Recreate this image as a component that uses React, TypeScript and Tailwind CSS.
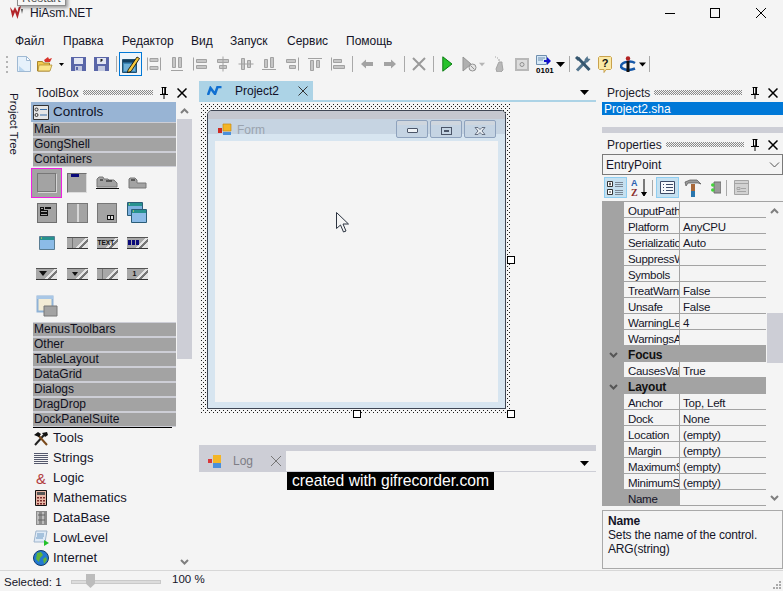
import type { ReactNode } from "react";

const MENU = [
  { label: "Файл", cls: "w-[48px]" },
  { label: "Правка", cls: "w-[59px]" },
  { label: "Редактор", cls: "w-[69px]" },
  { label: "Вид", cls: "w-[39px]" },
  { label: "Запуск", cls: "w-[57px]" },
  { label: "Сервис", cls: "w-[59px]" },
  { label: "Помощь", cls: "" },
];

const TOP_GROUPS = ["Main", "GongShell", "Containers"];
const BOTTOM_GROUPS = ["MenusToolbars", "Other", "TableLayout", "DataGrid", "Dialogs", "DragDrop", "DockPanelSuite"];

type Row = { name: string; value?: string; section?: boolean; selected?: boolean };

const ROWS: Row[] = [
  { name: "OuputPath" },
  { name: "Platform", value: "AnyCPU" },
  { name: "SerializationAssembly", value: "Auto" },
  { name: "SuppressWarnings" },
  { name: "Symbols" },
  { name: "TreatWarningsAsErrors", value: "False" },
  { name: "Unsafe", value: "False" },
  { name: "WarningLevel", value: "4" },
  { name: "WarningsAsErrors" },
  { name: "Focus", section: true },
  { name: "CausesValidation", value: "True" },
  { name: "Layout", section: true },
  { name: "Anchor", value: "Top, Left" },
  { name: "Dock", value: "None" },
  { name: "Location", value: "(empty)" },
  { name: "Margin", value: "(empty)" },
  { name: "MaximumSize", value: "(empty)" },
  { name: "MinimumSize", value: "(empty)" },
  { name: "Name", selected: true },
];

function Caret({ color = "#000" }: { color?: string }) {
  return (
    <svg width="9" height="5" viewBox="0 0 9 5">
      <path d="M0 0h9L4.500 5z" fill={color} />
    </svg>
  );
}

function Chevron({ up, color = "#7f7f7f" }: { up?: boolean; color?: string }) {
  return (
    <svg width="9" height="6" viewBox="0 0 9 6" fill="none" stroke={color} strokeWidth="2">
      <path d={up ? "M1 5l3.500-3.500L8 5" : "M1 1l3.500 3.500L8 1"} />
    </svg>
  );
}

function PanelHeader({ title, gripClass }: { title: string; gripClass: string }) {
  return (
    <div className="flex h-[17px] items-center text-[12px] text-[#1a1a2a]">
      <span>{title}</span>
      <div className={`h-[5px] bg-[conic-gradient(#8a8a8a_25%,#f4f4f4_0_50%,#8a8a8a_0_75%,#f4f4f4_0)] bg-[length:2px_2px] ${gripClass}`} />
      <svg width="10" height="12" viewBox="0 0 10 12" className="ml-auto" fill="none" stroke="#000">
        <path d="M3.500 1v6h3V1M2.500 .5h5M1 7.500h8M5 8v4" />
        <path d="M6 1v6" strokeWidth="1.500" />
      </svg>
      <svg width="10" height="10" viewBox="0 0 10 10" className="ml-[8px] mr-[5px]" stroke="#000" strokeWidth="1.500">
        <path d="M.5 .5l9 9M9.500 .5l-9 9" />
      </svg>
    </div>
  );
}

function Btn({ cls, children }: { cls: string; children?: ReactNode }) {
  return <div className={`flex h-full shrink-0 items-center justify-center ${cls}`}>{children}</div>;
}

function Sep({ cls }: { cls: string }) {
  return (
    <div className={`flex h-full shrink-0 items-center justify-center ${cls}`}>
      <div className="h-[16px] w-px bg-[#a9a9a9]" />
    </div>
  );
}

// grey, disabled alignment glyph made of bars
function AlignIcon({ d }: { d: string }) {
  return (
    <svg width="16" height="16" viewBox="0 0 16 16" fill="#c6c6c6" stroke="#a2a2a2">
      <path d={d} />
    </svg>
  );
}

const ALIGN_PATHS = [
  "M1.500 1.500v13M14.500 1.500v13M4 2.500h8v3H4zM4 10.500h8v3H4z",
  "M3.500 1.500h3v10h-3zM9.500 1.500h3v10h-3zM2 14.500h12",
  "M1.500 1.500v13M4.500 3.500h10v3h-10zM4.500 9.500h10v3h-10z",
  "M8 .5v15M2.500 3.500h11v3h-11zM4.500 9.500h7v3h-7z",
  "M.5 8h15M3.500 2.500h3v11h-3zM9.500 4.500h3v7h-3z",
  "M3.500 3.500h3v8h-3zM9.500 1.500h3v10h-3zM1 13.500h14",
  "M14.500 1.500v13M2.500 3.500h9v3h-9zM5.500 9.500h6v3h-6z",
  "M1 2.500h14M3.500 4.500h3v10h-3zM9.500 4.500h3v7h-3z",
  "M1.500 1.500v13M3.500 3.500h8v3h-8zM3.500 9.500h11v3h-11z",
];

function ToolBar() {
  return (
    <div className="flex h-[24px] shrink-0 items-center pl-[6px]">
      <div className="h-[17px] w-[6px] shrink-0 bg-[linear-gradient(#b4b4b4_40%,transparent_0)] bg-[length:2px_5px] bg-repeat-y" />
      <Btn cls="w-[23px]">
        <svg width="14" height="16" viewBox="0 0 14 16">
          <path d="M.5 .5h9l4 4v11H.5z" fill="#e6f1fb" stroke="#9fb9d3" />
          <path d="M2 10l6 5H2z" fill="#b9d5ee" />
          <path d="M9.500 .5v4h4z" fill="#fff" stroke="#9fb9d3" />
        </svg>
      </Btn>
      <Btn cls="w-[20px]">
        <svg width="16" height="16" viewBox="0 0 16 16">
          <path d="M.5 5.500h5l1 1.500h6v8H.5z" fill="#f1c94e" stroke="#a9852a" />
          <path d="M2 9h13l-2 6H1z" fill="#fbe58a" stroke="#a9852a" strokeWidth=".7" />
          <path d="M7 4l4-3 1 2 3-1-2 4-5 0z" fill="#d8332a" />
        </svg>
      </Btn>
      <Btn cls="w-[12px]">
        <svg width="5" height="3" viewBox="0 0 5 3"><path d="M0 0h5L2.500 3z" fill="#000" /></svg>
      </Btn>
      <Btn cls="w-[22px]">
        <svg width="15" height="14" viewBox="0 0 15 14">
          <path d="M0 0h15v14H0z" fill="#5a66a8" />
          <path d="M3 1h9v6H3z" fill="#e3e6f2" />
          <path d="M4 9h7v5H4z" fill="#c3c9e0" />
          <path d="M5 10h2v3H5z" fill="#5a66a8" />
        </svg>
      </Btn>
      <Btn cls="w-[24px]">
        <svg width="15" height="14" viewBox="0 0 15 14">
          <path d="M0 0h15v14H0z" fill="#5a66a8" />
          <path d="M3 1h9v6H3z" fill="#e3e6f2" />
          <path d="M4 9h7v5H4z" fill="#c3c9e0" />
          <path d="M6.500 2h2v2h-1v1h-1z" fill="#222" />
        </svg>
      </Btn>
      <Sep cls="w-[6px]" />
      <Btn cls="w-[23px] border border-[#0078d7] bg-[#eef5fb]">
        <svg width="18" height="17" viewBox="0 0 18 17">
          <path d="M.5 3.500h14v13H.5z" fill="#3a86b8" stroke="#22506f" />
          <path d="M1 4h13v2.500H1z" fill="#123f62" />
          <path d="M2 8h11v7H2z" fill="#6fb0d8" />
          <path d="M6 14l9-13 2.500 1.500L9 15.500 5.500 16.500z" fill="#f6c93d" stroke="#000" strokeWidth=".8" />
        </svg>
      </Btn>
      {ALIGN_PATHS.map((d) => (
        <Btn key={d} cls="w-[23px]"><AlignIcon d={d} /></Btn>
      ))}
      <Sep cls="w-[6px]" />
      <Btn cls="w-[23px]">
        <svg width="12" height="10" viewBox="0 0 12 10"><path d="M0 5l5-4.500V3h7v4H5v2.500z" fill="#a3a3a3" /></svg>
      </Btn>
      <Btn cls="w-[23px]">
        <svg width="12" height="10" viewBox="0 0 12 10"><path d="M12 5L7 .5V3H0v4h7v2.500z" fill="#a3a3a3" /></svg>
      </Btn>
      <Sep cls="w-[6px]" />
      <Btn cls="w-[23px]">
        <svg width="14" height="14" viewBox="0 0 14 14" stroke="#9a9a9a" strokeWidth="2"><path d="M1 1l12 12M13 1L1 13" /></svg>
      </Btn>
      <Sep cls="w-[6px]" />
      <Btn cls="w-[23px]">
        <svg width="11" height="16" viewBox="0 0 11 16"><path d="M.8 .8L10 8 .8 15.200z" fill="#27c22c" stroke="#0a7d12" /></svg>
      </Btn>
      <Btn cls="w-[20px]">
        <svg width="15" height="16" viewBox="0 0 15 16">
          <path d="M1 1l8 7-8 7z" fill="#b0b0b0" stroke="#939393" />
          <circle cx="10.500" cy="11.500" r="3.500" fill="#e4e4e4" stroke="#939393" />
          <path d="M8.500 9.500l4 4" stroke="#939393" />
        </svg>
      </Btn>
      <Btn cls="w-[6px]"><Caret color="#b5b5b5" /></Btn>
      <Btn cls="w-[27px]">
        <svg width="10" height="16" viewBox="0 0 10 16">
          <path d="M1 1h1M3 2h1M5 3v2M5 6h3v2l1 6-2 2H3l-1-3 2-5z" fill="#b9b9b9" stroke="#a4a4a4" />
        </svg>
      </Btn>
      <Btn cls="w-[20px]">
        <svg width="14" height="13" viewBox="0 0 14 13">
          <path d="M0 0h14v13H0z" fill="#b8b8b8" />
          <path d="M2 2h10v9H2z" fill="#dcdcdc" />
          <circle cx="7" cy="6.500" r="2" fill="none" stroke="#8f8f8f" />
        </svg>
      </Btn>
      <Btn cls="w-[23px]">
        <div className="relative h-[18px] w-[15px]">
          <svg width="15" height="11" viewBox="0 0 15 11" className="absolute left-0 top-0">
            <path d="M.5 .5h10v9H.5z" fill="#d6e8f7" stroke="#6f8fae" />
            <path d="M2 3h7M2 5h5" stroke="#6f8fae" />
            <path d="M8 5h3V2l4 4-4 4V7H8z" fill="#1111cc" />
          </svg>
          <span className="absolute bottom-[-2px] left-0 text-[8px] font-bold leading-[9px] text-black">0101</span>
        </div>
      </Btn>
      <Btn cls="w-[10px]"><Caret /></Btn>
      <Sep cls="w-[8px]" />
      <Btn cls="w-[20px]">
        <svg width="16" height="16" viewBox="0 0 16 16" fill="none">
          <path d="M2 14.500L13 3" stroke="#54768f" strokeWidth="3" />
          <path d="M9.500 3.500l3-3.500 .5 2.500 2.500 .5L12.500 6.500z" fill="#54768f" />
          <path d="M3 2l11.500 12" stroke="#35566f" strokeWidth="3" />
          <path d="M0 2l2-2 3 2-2 3z" fill="#35566f" />
        </svg>
      </Btn>
      <Btn cls="w-[24px]">
        <svg width="14" height="17" viewBox="0 0 14 17">
          <path d="M1.500 .5h11l1 1v11l-1 1H8l-2 3v-3H1.500l-1-1v-11z" fill="#fbe9a6" stroke="#c9a24d" />
          <text x="7" y="11" textAnchor="middle" fontSize="11" fontWeight="700" fontFamily="Liberation Sans, sans-serif" fill="#111">?</text>
        </svg>
      </Btn>
      <Btn cls="w-[22px]">
        <svg width="16" height="17" viewBox="0 0 16 17">
          <path d="M15 7C11 4.500 2 5.500 1 10c-.5 3 7 5.500 14 2.500" fill="none" stroke="#1557a8" strokeWidth="2.500" />
          <path d="M6.500 5h3v11h-3z" fill="#111" />
          <circle cx="8" cy="2.500" r="2.200" fill="#b22222" />
        </svg>
      </Btn>
      <Btn cls="w-[7px]"><Caret /></Btn>
      <Sep cls="w-[6px]" />
    </div>
  );
}

function Well({ children }: { children: ReactNode }) {
  return <div className="flex h-full items-center justify-center">{children}</div>;
}

function ToolGrid() {
  const win = "flex h-[20px] w-[20px] border border-[#6f6f6f] border-r-[#dcdcdc] border-b-[#dcdcdc] bg-[#a3a3a3]";
  const strip = "relative h-[12px] w-[21px] border-y border-t-[#555] border-b-[#333] bg-[#a8a8a8] bg-[linear-gradient(135deg,#a8a8a8_60%,#e5e5e5_60%_70%,#777_70%_80%,#e5e5e5_80%)]";
  return (
    <div className="grid h-[155px] grid-cols-[31px_30px_30px_30px] grid-rows-[31px_29px_31px_31px_33px]">
      <Well>
        <div className="flex h-[30px] w-[31px] items-center justify-center bg-[#a3a3a3] shadow-[inset_0_0_0_1px_#f020e0]">
          <div className="h-[19px] w-[19px] border border-[#777] shadow-[1px_1px_0_#d5d5d5]" />
        </div>
      </Well>
      <Well><div className={win}><div className="ml-[3px] h-[3px] w-[8px] bg-[#0a0a7a]" /></div></Well>
      <Well>
        <svg width="23" height="13" viewBox="0 0 23 13">
          <path d="M1 11V3l2-2h4l1 2h4l1 1h5l3 3v4z" fill="#a3a3a3" stroke="#777" />
          <path d="M4 4h3M10 5h6" stroke="#111" />
          <path d="M0 12.500h23" stroke="#111" />
        </svg>
      </Well>
      <Well>
        <svg width="19" height="12" viewBox="0 0 19 12">
          <path d="M1 11V2l1-1h5l2 2v3h9v5z" fill="#a3a3a3" stroke="#777" />
          <path d="M3 3h4" stroke="#111" />
        </svg>
      </Well>
      <Well>
        <div className="h-[20px] w-[20px] border border-[#6f6f6f] bg-[#a3a3a3] p-[2px]">
          <div className="mt-[1px] flex gap-px">
            <div className="h-[3px] w-[4px] border border-[#111]" />
            <div className="h-[2px] w-[6px] border border-[#111]" />
          </div>
          <div className="h-[3px] w-[8px] border border-[#111]" />
          <div className="h-[3px] w-[8px] border border-[#111]" />
        </div>
      </Well>
      <Well>
        <div className="flex h-[20px] w-[21px] border border-[#777] bg-[#a3a3a3]">
          <div className="h-full w-[11px] border-r-2 border-[#d8d8d8]" />
        </div>
      </Well>
      <Well>
        <div className="relative h-[20px] w-[20px] border border-[#777] bg-[#a3a3a3]">
          <div className="absolute bottom-[2px] right-[2px] flex gap-px bg-[#111] p-px">
            <div className="h-[3px] w-[2px] bg-[#ddd]" />
            <div className="h-[3px] w-[2px] bg-[#ddd]" />
          </div>
        </div>
      </Well>
      <Well>
        <svg width="20" height="21" viewBox="0 0 20 21">
          <path d="M.5 .5h15v13H.5z" fill="#7cb0df" stroke="#2b5d78" />
          <path d="M1 1h14v3H1z" fill="#27928f" />
          <path d="M4.500 7.500h15v13h-15z" fill="#8bbbe7" stroke="#2b5d78" />
          <path d="M5 8h14v3H5z" fill="#27928f" />
          <path d="M6 9h1M2 2h1" stroke="#ffe14d" />
        </svg>
      </Well>
      <Well>
        <svg width="16" height="14" viewBox="0 0 16 14">
          <path d="M.5 .5h15v13H.5z" fill="#8bbbe7" stroke="#5a7d93" />
          <path d="M1 1h14v3H1z" fill="#27928f" />
          <path d="M2 2h1" stroke="#ffe14d" />
        </svg>
      </Well>
      <Well><div className={strip}><div className="absolute left-[1px] top-0 h-full w-[5px] border-r border-[#777]" /></div></Well>
      <Well>
        <div className={strip}>
          <span className="absolute left-[1px] top-0 text-[6.500px] font-bold leading-[10px] text-[#111]">TEXT</span>
        </div>
      </Well>
      <Well>
        <div className={strip}>
          <div className="absolute left-[1px] top-[2px] flex gap-px">
            <div className="h-[5px] w-[3px] bg-[#0a0a7a]" />
            <div className="h-[5px] w-[3px] bg-[#0a0a7a]" />
            <div className="h-[5px] w-[3px] bg-[#0a0a7a]" />
          </div>
        </div>
      </Well>
      <Well>
        <div className={strip}>
          <div className="absolute left-[3px] top-[2px] border-x-[4px] border-t-[5px] border-x-transparent border-t-[#111]" />
        </div>
      </Well>
      <Well>
        <div className={strip}>
          <div className="absolute left-[5px] top-[3px] border-x-[3px] border-t-[4px] border-x-transparent border-t-[#111]" />
        </div>
      </Well>
      <Well><div className={strip}><div className="absolute left-[1px] top-0 h-full w-[5px] border-r border-[#777]" /></div></Well>
      <Well>
        <div className={strip}>
          <span className="absolute left-[6px] top-0 text-[7px] font-bold leading-[10px] text-[#111]">1</span>
        </div>
      </Well>
      <Well>
        <svg width="22" height="22" viewBox="0 0 22 22">
          <path d="M1.500 1.500h15v15h-15z" fill="#f3ecd6" stroke="#8fb2d6" strokeWidth="2" />
          <path d="M1 1h16v3H1z" fill="#a9c7e6" />
          <path d="M8 11h13v10H8z" fill="#a3a3a3" stroke="#777" />
        </svg>
      </Well>
    </div>
  );
}

function GroupRow({ label }: { label: string }) {
  return (
    <div className="ml-[2px] flex h-[15px] items-center border-y border-[#cdced6] bg-[#a3a3a3] pl-px text-[12px] leading-[13px] text-[#101020]">
      {label}
    </div>
  );
}

const CATEGORY_ICONS: { label: string; icon: ReactNode }[] = [
  {
    label: "Tools",
    icon: (
      <svg width="16" height="15" viewBox="0 0 16 15" fill="none">
        <path d="M2 14L11 4" stroke="#222" strokeWidth="2" />
        <path d="M14 14L5 4" stroke="#7a4a1c" strokeWidth="2" />
        <path d="M1 4l4-3 3 2-2 3zM9 2l5-1 1 3-3 2z" fill="#111" />
      </svg>
    ),
  },
  {
    label: "Strings",
    icon: (
      <svg width="14" height="11" viewBox="0 0 14 11" stroke="#54586c">
        <path d="M0 .5h14M0 2.500h14M0 4.500h14M0 6.500h14M0 8.500h14M0 10.500h14" />
      </svg>
    ),
  },
  {
    label: "Logic",
    icon: <span className="text-[15px] leading-[15px] text-[#b13b3b]">&amp;</span>,
  },
  {
    label: "Mathematics",
    icon: (
      <svg width="12" height="16" viewBox="0 0 12 16">
        <path d="M.5 .5h11v15H.5z" fill="#e8b9a8" stroke="#111" />
        <path d="M2 2h8v3H2z" fill="#555" />
        <path d="M2 7h2v1.500H2zM5 7h2v1.500H5zM8 7h2v1.500H8zM2 10h2v1.500H2zM5 10h2v1.500H5zM8 10h2v1.500H8zM2 13h2v1.500H2zM5 13h2v1.500H5zM8 13h2v1.500H8z" fill="#7a2b2b" />
      </svg>
    ),
  },
  {
    label: "DataBase",
    icon: (
      <svg width="11" height="14" viewBox="0 0 11 14">
        <path d="M0 0h11v14H0z" fill="#8c8c8c" />
        <path d="M1 1h2v12H1zM6 1h2v12H6z" fill="#bdbdbd" />
        <path d="M2 4h7M2 9h7" stroke="#666" />
      </svg>
    ),
  },
  {
    label: "LowLevel",
    icon: (
      <svg width="16" height="16" viewBox="0 0 16 16">
        <path d="M3 1h11l-2 11H1z" fill="#dfeaf6" stroke="#9fb5cc" />
        <path d="M4 4h7M4 6h7M3 8h7" stroke="#6d9ac4" />
        <path d="M11 10l5 3-5 3z" fill="#23c12a" />
      </svg>
    ),
  },
  {
    label: "Internet",
    icon: (
      <svg width="16" height="16" viewBox="0 0 16 16">
        <circle cx="8" cy="8" r="7.500" fill="#2279d2" stroke="#123c6b" />
        <path d="M4 3l4-1 2 3-3 3-1 4-3-3zM10 9l3-2 1 3-3 4z" fill="#5fb33a" />
      </svg>
    ),
  },
];

function ToolBox() {
  return (
    <div className="flex h-full w-[161px] shrink-0 flex-col pt-[3px]">
      <div className="pl-[5px]">
        <PanelHeader title="ToolBox" gripClass="ml-[4px] w-[70px]" />
      </div>
      <div className="mt-[1px] flex min-h-0 flex-1">
        <div className="w-[145px] shrink-0">
          <div className="flex h-[20px] items-center gap-[4px] bg-[#98b4d4] pl-[2px] text-[13.500px] text-[#0e1226]">
            <svg width="16" height="15" viewBox="0 0 16 15" fill="none" stroke="#333">
              <path d="M.5 .5h15v14H.5z" fill="#e6e6e6" />
              <circle cx="3.500" cy="4.500" r="1.500" />
              <circle cx="3.500" cy="10" r="1.500" />
              <path d="M7 4.500h7M7 10h7" stroke="#3a6fa8" />
            </svg>
            Controls
          </div>
          {TOP_GROUPS.map((g) => <GroupRow key={g} label={g} />)}
          <ToolGrid />
          {BOTTOM_GROUPS.map((g) => <GroupRow key={g} label={g} />)}
          <div className="ml-[2px] mr-[4px] h-px bg-black" />
          <div>
            {CATEGORY_ICONS.map((c) => (
              <div key={c.label} className="flex h-[20px] items-center pl-[2px] text-[13px] text-[#141428]">
                <div className="flex w-[16px] justify-center">{c.icon}</div>
                <span className="ml-[4px]">{c.label}</span>
              </div>
            ))}
          </div>
        </div>
        <div className="flex h-full w-[16px] flex-col items-center">
          <div className="flex h-[17px] items-center"><Chevron up /></div>
          <div className="h-[240px] w-[15px] bg-[#cdced6]" />
          <div className="mb-[5px] mt-auto"><Chevron /></div>
        </div>
      </div>
    </div>
  );
}

function HatchFrame({ children }: { children: ReactNode }) {
  return (
    <div className="relative ml-[2px] mt-[2px] h-[310px] w-[310px] shrink-0 bg-[radial-gradient(circle_at_0.5px_0.5px,#1a1a1a_0.7px,transparent_0.9px),radial-gradient(circle_at_0.5px_0.5px,#1a1a1a_0.7px,transparent_0.9px)] bg-[length:4px_4px] bg-[position:0_0,2px_2px] pb-[5px] pl-[6px] pr-[5px] pt-[6px]">
      {children}
      <div className="absolute bottom-[-4px] left-[152px] h-[8px] w-[8px] border border-black bg-white" />
      <div className="absolute bottom-[-4px] right-[-4px] h-[8px] w-[8px] border border-black bg-white" />
      <div className="absolute right-[-4px] top-[152px] h-[8px] w-[8px] border border-black bg-white" />
    </div>
  );
}

function WinBtn({ children }: { children: ReactNode }) {
  return (
    <div className="flex h-[18px] w-[32px] items-center justify-center rounded-[2px] border border-[#8ea2bd] bg-[linear-gradient(#cfd6de_4px,#c5d4e3_4px)] pt-[3px]">
      {children}
    </div>
  );
}

function FormDesigner() {
  return (
    <div className="flex h-full flex-col rounded-t-[5px] border border-[#3f4654] bg-[#d7e5f0]">
      <div className="flex h-[30px] shrink-0 items-start rounded-t-[4px] bg-[linear-gradient(#c5c7cf_8px,#c6d4e2_8px,#c6d4e2_23px,#d7e5f0_23px)] pl-[10px] pt-[9px]">
        <svg width="14" height="13" viewBox="0 0 14 13" className="mt-[3px]">
          <path d="M0 5h4v5H0z" fill="#cf2a22" />
          <path d="M5 1h8v7H5z" fill="#f3b526" stroke="#c98a12" strokeWidth=".7" />
          <path d="M5 9h8v3H5z" fill="#4a8fdb" />
        </svg>
        <span className="ml-[5px] mt-[3px] text-[12px] leading-[14px] text-[#9aa3ae]">Form</span>
        <div className="ml-auto mr-[9px] flex gap-[2px]">
          <WinBtn><div className="h-[5px] w-[11px] rounded-[1px] border border-[#4b5568] bg-[#eef2f6]" /></WinBtn>
          <WinBtn><div className="flex h-[8px] w-[11px] items-center justify-center border border-[#4b5568]"><div className="h-[2px] w-[5px] bg-[#4b5568]" /></div></WinBtn>
          <WinBtn>
            <svg width="12" height="8" viewBox="0 0 12 8" fill="#e8edf2" stroke="#4b5568" strokeWidth=".8">
              <path d="M1 .5h3l2 2 2-2h3L8 4l3 3.500H8l-2-2-2 2H1L4 4z" />
            </svg>
          </WinBtn>
        </div>
      </div>
      <div className="mx-[7px] mb-[6px] flex-1 bg-[#f4f4f4]" />
    </div>
  );
}

function LogBar() {
  return (
    <div className="relative mt-[31px] flex h-[27px] shrink-0 flex-col bg-[#cdced6]">
      <div className="mt-[6px] flex h-[20px] items-center">
        <div className="flex w-[87px] items-center pl-[9px] text-[12px] text-[#7d7d85]">
          <svg width="14" height="13" viewBox="0 0 14 13">
            <path d="M0 4h4v4H0z" fill="#d9383a" />
            <path d="M5 0h8v8H5z" fill="#f3b526" />
            <path d="M5 8h8v5H5z" fill="#4a8fdb" />
          </svg>
          <span className="ml-[11px]">Log</span>
          <svg width="10" height="10" viewBox="0 0 10 10" className="ml-[18px]" stroke="#777"><path d="M0 0l10 10M10 0L0 10" /></svg>
        </div>
        <div className="flex h-full flex-1 items-end justify-end bg-[#f4f4f4] pb-[5px] pr-[7px]"><Caret /></div>
      </div>
      <div className="absolute left-[88px] top-[27px] flex h-[18px] w-[207px] items-center justify-center bg-black text-[15.700px] text-white">
        created with gifrecorder.com
      </div>
    </div>
  );
}

function DocumentArea() {
  return (
    <div className="ml-[7px] flex h-full w-[397px] shrink-0 flex-col">
      <div className="flex h-[19px] shrink-0">
        <div className="flex w-[114px] items-center bg-[#acd3e6] pl-[8px] text-[12px] text-[#101028]">
          <svg width="15" height="9" viewBox="0 0 15 9" fill="none" stroke="#0f6fd1" strokeWidth="2.500">
            <path d="M1 9l2.500-7 4.500 6 2.500-7h4" />
          </svg>
          <span className="ml-[13px]">Project2</span>
          <svg width="10" height="10" viewBox="0 0 10 10" className="ml-[19px]" stroke="#333"><path d="M.5 .5l9 9M9.500 .5l-9 9" /></svg>
        </div>
        <div className="ml-auto mr-[7px] flex items-center pt-[3px]"><Caret /></div>
      </div>
      <div className="h-[2px] shrink-0 bg-[#acd3e6]" />
      <HatchFrame><FormDesigner /></HatchFrame>
      <LogBar />
    </div>
  );
}

function PropGrid() {
  return (
    <div className="mt-[3px] flex h-[305px] shrink-0 border-t border-[#a3a3a3]">
      <div className="w-[164px] shrink-0 bg-[#a3a3a3] pl-[22px]">
        {ROWS.map((r) =>
          r.section ? (
            <div key={r.name} className="ml-[-22px] flex h-[16px] items-center bg-[#a3a3a3] pt-px text-[12px] font-bold text-[#111]">
              <span className="flex w-[22px] justify-center"><Chevron color="#555" /></span>
              <span className="ml-[4px] tracking-[-0.2px]">{r.name}</span>
            </div>
          ) : (
            <div key={r.name} className={`flex h-[16px] border-b border-[#a3a3a3] ${r.selected ? "" : "bg-[#f4f4f4]"}`}>
              <div className="w-[56px] shrink-0 overflow-x-clip whitespace-nowrap border-r border-[#a3a3a3] pl-[4px] pt-[2px] text-[11.500px] leading-[14px] tracking-[-0.3px] text-[#141428]">
                {r.name}
              </div>
              <div className={`flex-1 pl-[3px] pt-[2px] text-[11.500px] leading-[14px] tracking-[-0.2px] text-[#141428] ${r.selected ? "bg-[#f4f4f4]" : ""}`}>
                {r.value}
              </div>
            </div>
          ),
        )}
      </div>
      <div className="flex w-[17px] flex-col items-center">
        <div className="flex h-[18px] items-center"><Chevron up /></div>
        <div className="mt-[93px] h-[50px] w-[16px] bg-[#cdced6]" />
        <div className="mb-[5px] mt-auto"><Chevron /></div>
      </div>
    </div>
  );
}

function RightPanels() {
  return (
    <div className="ml-[6px] flex h-full w-[181px] shrink-0 flex-col pt-[3px]">
      <div className="pl-[5px]"><PanelHeader title="Projects" gripClass="ml-[4px] w-[88px]" /></div>
      <div className="mt-[1px] h-[13px] shrink-0 bg-[#0078d7] pl-[2px] text-[12px] leading-[14px] text-white">Project2.sha</div>
      <div className="mt-[12px] h-[6px] shrink-0 bg-[#cdced6]" />
      <div className="mt-[3px] pl-[5px]"><PanelHeader title="Properties" gripClass="ml-[4px] w-[78px]" /></div>
      <div className="mt-[1px] flex h-[21px] shrink-0 items-center border border-[#7a7a7a] pl-[3px] text-[12px] text-[#141428]">
        EntryPoint
        <svg width="11" height="6" viewBox="0 0 11 6" fill="none" stroke="#555" className="ml-auto mr-[2px]"><path d="M1 .5l4.500 4.500L10 .5" /></svg>
      </div>
      <div className="mt-[2px] flex h-[21px] shrink-0 items-center pl-[2px]">
        <div className="flex h-[21px] w-[23px] items-center justify-center border border-[#8fcdf0] bg-[#c5e0f0]">
          <svg width="17" height="16" viewBox="0 0 17 16" fill="none" stroke="#333">
            <path d="M.5 1.500h5v5h-5zM.5 9.500h5v5h-5z" fill="#fff" />
            <path d="M2 4h2M3 2.500v3M2 12h2" />
            <path d="M8 2.500h8M8 4.500h8M8 6.500h8M8 10.500h8M8 12.500h8M8 14.500h8" stroke="#7b8794" />
          </svg>
        </div>
        <div className="flex w-[24px] justify-center">
          <svg width="17" height="19" viewBox="0 0 17 19">
            <text x="0" y="8" fontSize="9" fontWeight="700" fontFamily="Liberation Sans, sans-serif" fill="#2b5fb0">A</text>
            <text x="0" y="18" fontSize="10" fontWeight="700" fontFamily="Liberation Serif, serif" fill="#8a2d2d">Z</text>
            <path d="M13 1v16M10.500 14l2.500 4 2.500-4" stroke="#000" fill="#000" />
          </svg>
        </div>
        <div className="ml-[1px] h-[16px] w-px bg-[#a9a9a9]" />
        <div className="ml-[3px] flex h-[21px] w-[23px] items-center justify-center border border-[#8fcdf0] bg-[#c5e0f0]">
          <svg width="15" height="13" viewBox="0 0 15 13" fill="none" stroke="#3c4a66">
            <path d="M.5 .5h14v12H.5z" fill="#f6f8fb" />
            <path d="M3 3.500h1M6 3.500h7M3 6.500h1M6 6.500h7M3 9.500h1M6 9.500h7" />
          </svg>
        </div>
        <div className="flex w-[27px] justify-center">
          <svg width="18" height="18" viewBox="0 0 18 18">
            <path d="M1 3l5-2h7l4 4-3-1h-3L11 4H7L4 4 2 7z" fill="#9a9a9a" stroke="#555" strokeWidth=".7" />
            <path d="M7 5h4v8H7z" fill="#a8683a" />
            <path d="M7 12h4v6H7z" fill="#2a76ad" />
          </svg>
        </div>
        <div className="flex w-[20px] justify-center">
          <svg width="10" height="13" viewBox="0 0 10 13">
            <path d="M3 1h7v11H3z" fill="#9a9a9a" stroke="#6f6f6f" />
            <circle cx="1.800" cy="4" r="1.800" fill="#42d33a" />
            <circle cx="1.800" cy="9" r="1.800" fill="#42d33a" />
          </svg>
        </div>
        <div className="h-[16px] w-px bg-[#a9a9a9]" />
        <div className="ml-[7px]">
          <svg width="15" height="15" viewBox="0 0 15 15" fill="#d2d2d2" stroke="#a4a4a4">
            <path d="M.5 .5h14v14H.5z" />
            <path d="M.5 3.500h14M3 7.500h3v2H3zM7 8.500h5M3 11.500h9" fill="none" />
          </svg>
        </div>
      </div>
      <PropGrid />
      <div className="mt-[4px] flex h-[59px] shrink-0 flex-col border border-[#a9a9a9] pl-[5px] pt-[3px] text-[12px] leading-[14px] tracking-[-0.15px] text-[#141428]">
        <span className="font-bold">Name</span>
        <span>Sets the name of the control.</span>
        <span>ARG(string)</span>
      </div>
    </div>
  );
}

function StatusBar() {
  return (
    <div className="relative flex h-[21px] shrink-0 items-center border-t border-[#d7d7d7] pl-[4px] text-[11.500px] text-[#141428]">
      <span className="w-[67px] pt-[3px]">Selected: 1</span>
      <div className="relative mt-[2px] h-[4px] w-[90px] border border-[#c9c9c9] bg-[#dcdcdc]">
        <div className="absolute left-[14px] top-[-7px] h-[14px] w-[9px] bg-[#bcbcbc] [clip-path:polygon(0_0,100%_0,100%_70%,50%_100%,0_70%)]" />
      </div>
      <span className="ml-[11px] mt-[-2px]">100 %</span>
      <div className="absolute bottom-[2px] right-[2px] grid grid-cols-3 gap-px">
        <div className="h-[2px] w-[2px]" /><div className="h-[2px] w-[2px]" /><div className="h-[2px] w-[2px] bg-[#a9a9a9]" />
        <div className="h-[2px] w-[2px]" /><div className="h-[2px] w-[2px] bg-[#a9a9a9]" /><div className="h-[2px] w-[2px] bg-[#a9a9a9]" />
        <div className="h-[2px] w-[2px] bg-[#a9a9a9]" /><div className="h-[2px] w-[2px] bg-[#a9a9a9]" /><div className="h-[2px] w-[2px] bg-[#a9a9a9]" />
      </div>
    </div>
  );
}

export default function App() {
  return (
    <div className="relative flex h-[591px] w-[783px] flex-col overflow-hidden bg-[#f4f4f4] font-['Liberation_Sans',sans-serif] text-[#141428]">
      {/* window title */}
      <div className="flex h-[30px] shrink-0 items-start pl-[10px] pt-[5px]">
        <svg width="13" height="15" viewBox="0 0 13 15">
          <path d="M0 2l2.500 11 2.500-6 2.500 7L11 1 8.500 2.500 7.500 7 5 2 3 6z" fill="#b3252a" />
          <path d="M11 4l2 0-1 5z" fill="#555" />
        </svg>
        <span className="ml-[7px] text-[12px] leading-[16px] text-[#141428]">HiAsm.NET</span>
        <div className="ml-auto mt-[3px] flex items-center">
          <div className="h-px w-[10px] bg-black" />
          <div className="ml-[35px] h-[10px] w-[10px] border border-black" />
          <svg width="10" height="10" viewBox="0 0 10 10" className="ml-[36px] mr-[17px]" stroke="#000"><path d="M0 0l10 10M10 0L0 10" /></svg>
        </div>
      </div>
      {/* tooltip left over from the recording */}
      <div className="absolute left-[17px] top-[-10px] h-[16px] w-[49px] border border-[#8c8c8c] bg-[#f6f6f6] pl-[4px] text-[12px] leading-[14px] text-[#555] shadow-[2px_2px_3px_rgba(0,0,0,.35)]">
        Restart
      </div>
      <div className="flex h-[22px] shrink-0 items-center pl-[15px] text-[12px] text-[#141428]">
        {MENU.map((m) => <span key={m.label} className={m.cls}>{m.label}</span>)}
      </div>
      <ToolBar />
      <div className="flex min-h-0 flex-1 pt-[5px]">
        <div className="flex w-[31px] shrink-0 justify-center pr-[3px] pt-[12px]">
          <span className="text-[11.500px] leading-[14px] text-[#141428] [writing-mode:vertical-rl]">Project Tree</span>
        </div>
        <ToolBox />
        <DocumentArea />
        <RightPanels />
      </div>
      <StatusBar />
      {/* mouse pointer */}
      <svg width="14" height="21" viewBox="0 0 14 21" className="absolute left-[336px] top-[212px]">
        <path d="M.5 .5v16l4-3.500 3 7 2.500-1-3-7h5.500z" fill="#f4f4f4" stroke="#2b3340" />
      </svg>
    </div>
  );
}
